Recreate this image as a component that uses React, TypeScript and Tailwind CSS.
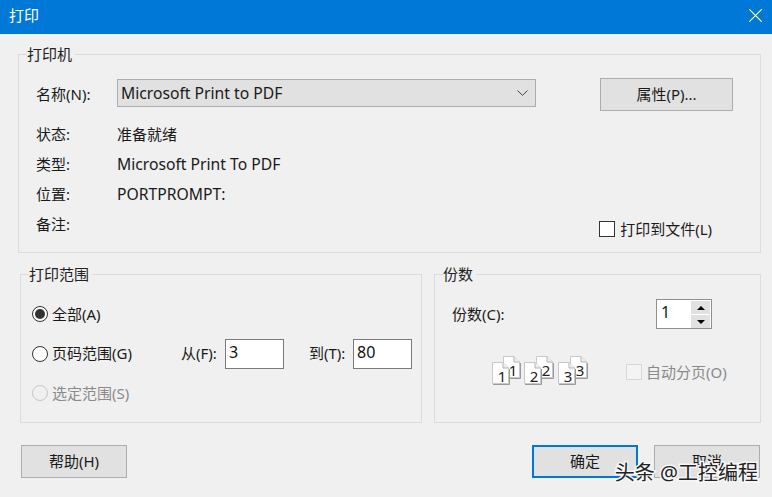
const font = "font-['Noto_Sans','Noto_Sans_CJK_SC',sans-serif]";

const InfoRow = ({ label, value, latin }: { label: string; value?: string; latin?: boolean }) => (
  <div className="flex h-[30px] items-center">
    <span className="w-[81px]">{label}</span>
    <span className={latin ? "pt-[2px] text-[15.7px]" : ""}>{value}</span>
  </div>
);

const Sheet = ({ n, x, y }: { n: number; x: number; y: number }) => (
  <g transform={`translate(${x} ${y})`}>
    <path d="M0.5 0.5H11L16.5 6V21.5H0.5Z" fill="#fff" stroke="#c8c8c8" />
    <path d="M11 0.5V6H16.5" fill="#eee" stroke="#b5b5b5" />
    <path d="M1 22.5H17.5V7" fill="none" stroke="#9a9a9a" />
    <text x="10" y="19.5" textAnchor="middle" fontSize="15" fill="#222">
      {n}
    </text>
  </g>
);

const CollateIcon = () => (
  <svg width="100" height="32" viewBox="0 0 100 32" className="shrink-0">
    <Sheet n={1} x={11} y={0} />
    <Sheet n={1} x={0} y={6} />
    <Sheet n={2} x={44} y={0} />
    <Sheet n={2} x={32} y={6} />
    <Sheet n={3} x={78} y={0} />
    <Sheet n={3} x={66} y={6} />
  </svg>
);

const GroupTitle = ({ children }: { children: string }) => (
  <span className="absolute -top-[11px] left-[8px] bg-[#f0f0f0] pr-[3px] leading-[20px] text-[#222]">{children}</span>
);

const Radio = ({ checked, disabled, label }: { checked?: boolean; disabled?: boolean; label: string }) => (
  <label className={`flex items-center gap-[4px] ${disabled ? "text-[#8a8a8a]" : ""}`}>
    <span
      className={`flex h-[16px] w-[16px] items-center justify-center rounded-full border ${
        disabled ? "border-[#c8c8c8] bg-[#f0f0f0]" : "border-[#333] bg-white"
      }`}
    >
      {checked && <span className="h-[10px] w-[10px] rounded-full bg-[#333]" />}
    </span>
    {label}
  </label>
);

const NumberBox = ({ value }: { value: string }) => (
  <div className="h-[30px] w-[59px] border border-[#7a7a7a] bg-white pl-[3px] text-[16px] leading-[24px] text-[#111]">{value}</div>
);

const Arrow = ({ up }: { up?: boolean }) => (
  <div className="flex h-[13px] w-[19px] items-center justify-center bg-[#e1e1e1]">
    <div
      className={`h-0 w-0 border-x-[4px] border-x-transparent ${
        up ? "border-b-[4px] border-b-black" : "border-t-[4px] border-t-black"
      }`}
    />
  </div>
);

const Btn = ({ children, active }: { children: string; active?: boolean }) => (
  <button
    className={`flex h-[33px] w-[106px] items-center justify-center bg-[#e1e1e1] ${
      active ? "border-2 border-[#0078d7]" : "border border-[#adadad]"
    }`}
  >
    {children}
  </button>
);

export default function App() {
  return (
    <div className={`relative flex h-[497px] w-[772px] flex-col overflow-hidden bg-[#f0f0f0] text-[15px] text-[#1a1a1a] ${font}`}>
      {/* title bar */}
      <div className="flex h-[34px] shrink-0 items-center justify-between bg-[#0078d7] pr-[10px] pb-[4px] pl-[9px] text-white">
        <span>打印</span>
        <svg width="13" height="13" viewBox="0 0 13 13" stroke="#fff" strokeWidth="1.1">
          <path d="M0.3 0.3L12.7 12.7M12.7 0.3L0.3 12.7" />
        </svg>
      </div>

      {/* printer */}
      <div className="relative mt-[20px] ml-[18px] h-[199px] w-[743px] border border-[#dcdcdc] pt-[23px] pl-[17px]">
        <GroupTitle>打印机</GroupTitle>
        <div className="flex items-center">
          <span className="w-[81px]">名称(N):</span>
          <div className="mb-[3px] flex h-[28px] w-[419px] items-center justify-between border border-[#adadad] bg-[#e1e1e1] pr-[7px] pl-[3px] text-[15.7px]">
            <span className="pt-[2px]">Microsoft Print to PDF</span>
            <svg width="11" height="6" viewBox="0 0 11 6" fill="none" stroke="#444" strokeWidth="1">
              <path d="M0.5 0.5L5.5 5.3L10.5 0.5" />
            </svg>
          </div>
          <button className="ml-[64px] h-[33px] w-[133px] border border-[#adadad] bg-[#e1e1e1]">属性(P)...</button>
        </div>
        <div className="mt-[8px] flex items-end justify-between">
          <div className="flex flex-col">
            <InfoRow label="状态:" value="准备就绪" />
            <InfoRow label="类型:" value="Microsoft Print To PDF" latin />
            <InfoRow label="位置:" value="PORTPROMPT:" latin />
            <InfoRow label="备注:" />
          </div>
          <label className="mr-[48px] -mb-px flex items-center gap-[5px]">
            <span className="h-[16px] w-[16px] border border-[#333] bg-white" />
            打印到文件(L)
          </label>
        </div>
      </div>

      {/* range + copies */}
      <div className="mt-[21px] ml-[20px] flex gap-[12px]">
        <div className="relative h-[149px] w-[402px] border border-[#dcdcdc] pt-[28px] pl-[11px]">
          <GroupTitle>打印范围</GroupTitle>
          <Radio checked label="全部(A)" />
          <div className="mt-[13px] flex h-[30px] items-center">
            <div className="w-[149px]">
              <Radio label="页码范围(G)" />
            </div>
            <span className="w-[44px]">从(F):</span>
            <NumberBox value="3" />
            <span className="ml-[25px] w-[44px]">到(T):</span>
            <NumberBox value="80" />
          </div>
          <div className="mt-[13px]">
            <Radio disabled label="选定范围(S)" />
          </div>
        </div>

        <div className="relative h-[149px] w-[327px] border border-[#dcdcdc] pt-[24px] pl-[17px]">
          <GroupTitle>份数</GroupTitle>
          <div className="flex items-center">
            <span className="w-[204px]">份数(C):</span>
            <div className="flex h-[30px] w-[56px] border border-[#8f8f8f] bg-white">
              <span className="w-[34px] pl-[4px] text-[16px] leading-[25px]">1</span>
              <div className="flex flex-col gap-px pt-px">
                <Arrow up />
                <Arrow />
              </div>
            </div>
          </div>
          <div className="mt-[27px] ml-[40px] flex items-center">
            <CollateIcon />
            <label className="ml-[34px] flex items-center gap-[4px] text-[#8a8a8a]">
              <span className="h-[16px] w-[16px] border border-[#d8d8d8] bg-[#f4f4f4]" />
              自动分页(O)
            </label>
          </div>
        </div>
      </div>

      {/* footer buttons */}
      <div className="mt-[22px] flex pr-[12px] pl-[21px]">
        <Btn>帮助(H)</Btn>
        <div className="ml-auto flex gap-[16px]">
          <Btn active>确定</Btn>
          <Btn>取消</Btn>
        </div>
      </div>

      {/* watermark */}
      <span className="absolute right-[14px] bottom-[11px] text-[20px] leading-[26px] text-[#222] [paint-order:stroke] [-webkit-text-stroke:3px_#f6f6f6]">
        头条 @工控编程
      </span>
    </div>
  );
}
